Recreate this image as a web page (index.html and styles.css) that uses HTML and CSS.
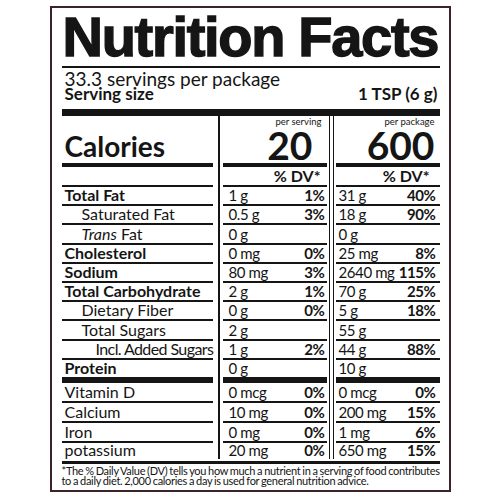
FILE: index.html
```html
<!DOCTYPE html>
<html lang="en">
<head>
  <meta charset="UTF-8">
  <title>Nutrition Facts</title>
  <link rel="stylesheet" href="styles.css">
</head>

<body>
  <div class="label">
    <h1 class="title">Nutrition Facts</h1>

    <div class="servings">
      <p class="per-package">33.3 servings per package</p>
      <p class="serving-size"><b>Serving size</b><b>1 TSP (6 g)</b></p>
    </div>

    <div class="facts">
      <div class="divider single"></div>
      <div class="divider double"></div>

      <div class="row calories">
        <div>Calories</div>
        <div class="serv"><small>per serving</small><span>20</span></div>
        <div class="pkg"><small>per package</small><span>600</span></div>
      </div>

      <div class="row dv-head">
        <div></div>
        <div class="serv">% DV*</div>
        <div class="pkg">% DV*</div>
      </div>

      <div class="row">
        <div><b>Total Fat</b></div>
        <div class="serv"><span>1 g</span><b>1%</b></div>
        <div class="pkg"><span>31 g</span><b>40%</b></div>
      </div>
      <div class="row sub">
        <div>Saturated Fat</div>
        <div class="serv"><span>0.5 g</span><b>3%</b></div>
        <div class="pkg"><span>18 g</span><b>90%</b></div>
      </div>
      <div class="row sub">
        <div><span><i>Trans</i> Fat</span></div>
        <div class="serv"><span>0 g</span></div>
        <div class="pkg"><span>0 g</span></div>
      </div>
      <div class="row">
        <div><b>Cholesterol</b></div>
        <div class="serv"><span>0 mg</span><b>0%</b></div>
        <div class="pkg"><span>25 mg</span><b>8%</b></div>
      </div>
      <div class="row">
        <div><b>Sodium</b></div>
        <div class="serv"><span>80 mg</span><b>3%</b></div>
        <div class="pkg"><span>2640 mg</span><b>115%</b></div>
      </div>
      <div class="row">
        <div><b>Total Carbohydrate</b></div>
        <div class="serv"><span>2 g</span><b>1%</b></div>
        <div class="pkg"><span>70 g</span><b>25%</b></div>
      </div>
      <div class="row sub">
        <div>Dietary Fiber</div>
        <div class="serv"><span>0 g</span><b>0%</b></div>
        <div class="pkg"><span>5 g</span><b>18%</b></div>
      </div>
      <div class="row sub">
        <div>Total Sugars</div>
        <div class="serv"><span>2 g</span></div>
        <div class="pkg"><span>55 g</span></div>
      </div>
      <div class="row added">
        <div>Incl. Added Sugars</div>
        <div class="serv"><span>1 g</span><b>2%</b></div>
        <div class="pkg"><span>44 g</span><b>88%</b></div>
      </div>
      <div class="row protein">
        <div><b>Protein</b></div>
        <div class="serv"><span>0 g</span></div>
        <div class="pkg"><span>10 g</span></div>
      </div>

      <div class="row vit">
        <div>Vitamin D</div>
        <div class="serv"><span>0 mcg</span><b>0%</b></div>
        <div class="pkg"><span>0 mcg</span><b>0%</b></div>
      </div>
      <div class="row vit">
        <div>Calcium</div>
        <div class="serv"><span>10 mg</span><b>0%</b></div>
        <div class="pkg"><span>200 mg</span><b>15%</b></div>
      </div>
      <div class="row vit">
        <div>Iron</div>
        <div class="serv"><span>0 mg</span><b>0%</b></div>
        <div class="pkg"><span>1 mg</span><b>6%</b></div>
      </div>
      <div class="row vit last">
        <div>potassium</div>
        <div class="serv"><span>20 mg</span><b>0%</b></div>
        <div class="pkg"><span>650 mg</span><b>15%</b></div>
      </div>
    </div>

    <p class="footnote">*The % Daily Value (DV) tells you how much a nutrient in a serving of food contributes<br>to a daily diet. 2,000 calories a day is used for general nutrition advice.</p>
  </div>
</body>
</html>
```

FILE: styles.css
```css
* {
  margin: 0;
  padding: 0;
  box-sizing: border-box;
}

body {
  background: #fff;
  color: #151515;
  font-family: Lato, "Open Sans", sans-serif;
  display: flex;
  justify-content: center;
  padding-top: 6px;
}

.label {
  width: 401px;
  height: 486px;
  border: 2px solid #3d2329;
  padding: 3px 9px 0 10px;
}

.title {
  font: bold 56px/52px "Liberation Sans", Arial, sans-serif;
  letter-spacing: -1.3px;
  -webkit-text-stroke: 1.4px #151515;
  padding-left: 1px;
  padding-bottom: 3px;
  border-bottom: 2px solid #151515;
}

.servings {
  padding: 2px 2px 8px 3px;
  border-bottom: 7px solid #151515;
}

.per-package {
  font-size: 19px;
  line-height: 17px;
}

.serving-size {
  display: flex;
  justify-content: space-between;
  font-size: 17px;
  line-height: 14px;
}

/* table: name | line | per serving | double line | per package */
.facts {
  display: grid;
  grid-template-columns: 151px 10px 104px 9px 104px;
}

.divider {
  grid-row: 1 / span 16;
  justify-self: center;
}

.divider.single {
  grid-column: 2;
  width: 2px;
  background: #151515;
  margin-left: 2px;
}

.divider.double {
  grid-column: 4;
  width: 5px;
  border-left: 1.5px solid #151515;
  border-right: 1.5px solid #151515;
}

.row {
  display: contents;
}

.row > div {
  height: 19.2px;
  border-bottom: 2px solid #151515;
  display: flex;
  align-items: flex-end;
  font-size: 16px;
  line-height: 16px;
  padding-bottom: 1px;
  white-space: nowrap;
}

.row > :nth-child(1) {
  grid-column: 1;
  padding-left: 3px;
}

.row > .serv,
.row > .pkg {
  justify-content: space-between;
  gap: 4px;
  font-size: 15px;
  letter-spacing: -0.4px;
}

.row > .serv {
  grid-column: 3;
  padding-left: 6px;
  padding-right: 2px;
}

.row > .pkg {
  grid-column: 5;
  padding-left: 3px;
  padding-right: 4px;
}

.sub > :nth-child(1) {
  padding-left: 20px;
}

.added > :nth-child(1) {
  padding-left: 34px;
  letter-spacing: -0.6px;
}

.calories > div {
  height: 51px;
  border-bottom-width: 4px;
}

.calories > :nth-child(1) {
  font-size: 28px;
  line-height: 28px;
  font-weight: bold;
  padding-bottom: 3px;
}

.row.calories > .serv,
.row.calories > .pkg {
  flex-direction: column;
  align-items: flex-end;
  justify-content: space-between;
  gap: 0;
  padding-bottom: 3px;
  padding-right: 5px;
  letter-spacing: 0;
}

.calories small {
  font-size: 9.5px;
  line-height: 10px;
  margin-top: 1px;
}

.calories span {
  font-size: 39px;
  line-height: 30px;
  font-weight: bold;
}

.calories > .serv span {
  margin-right: 9px;
}

.row.dv-head > div {
  height: 20px;
  justify-content: flex-end;
  font-size: 16px;
  font-weight: bold;
  letter-spacing: 0;
}

.row.dv-head > .serv {
  padding-right: 6px;
}

.row.dv-head > .pkg {
  padding-right: 10px;
}

.protein > div {
  height: 23px;
  border-bottom-width: 6px;
}

.vit > div {
  height: 20px;
}

.last > div {
  height: 16px;
  border-bottom: none;
}

.footnote {
  margin-top: 2px;
  border-top: 3px solid #151515;
  padding-top: 2px;
  font-size: 11px;
  line-height: 10.5px;
  letter-spacing: -0.3px;
  word-spacing: -0.6px;
  white-space: nowrap;
}
```
